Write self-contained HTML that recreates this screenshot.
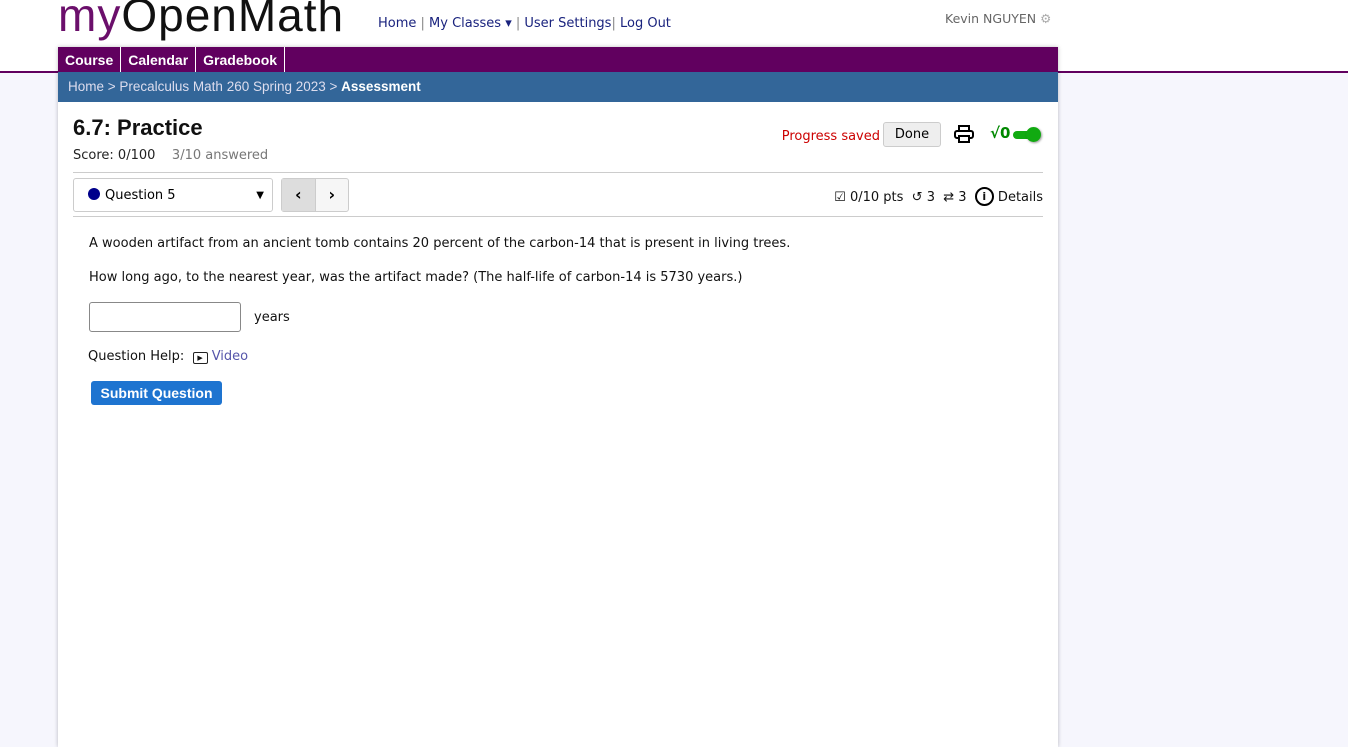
<!DOCTYPE html>
<html><head><style>
body{margin:0;width:1348px;height:713px;overflow:hidden;background:#f6f6fd;font-family:"DejaVu Sans",sans-serif;position:relative}
.hdr{position:absolute;left:0;top:0;width:1348px;height:71px;background:#fff;border-bottom:2px solid #61005f}
.logo{position:absolute;left:58px;top:-12px;font-size:46px;color:#111;font-family:"Liberation Sans",sans-serif;letter-spacing:1px}
.logo span{color:#6b0f6b}
.nav{position:absolute;left:378px;top:16px;font-size:13px;color:#888}
.nav a{color:#1a237e;text-decoration:none}
.user{position:absolute;left:945px;top:11px;font-size:12.5px;color:#666}
.main{position:absolute;left:58px;top:47px;width:1000px;height:700px;background:#fff;box-shadow:0 0 4px rgba(0,0,0,.25)}
.tabs{height:25px;background:#61005f;display:flex;font-family:"Liberation Sans",sans-serif}
.tabs div{color:#fff;font-size:14px;font-weight:bold;padding:5px 7px 0;border-right:1px solid #fff}
.crumb{height:30px;background:#336699;color:#dde;font-size:13.5px;line-height:30px;padding-left:10px;font-family:"Liberation Sans",sans-serif}
.crumb b{color:#fff}
.abs{position:absolute}
.t{font-size:13px;color:#111}
</style></head><body>
<div class="hdr"></div>
<div class="logo"><span>my</span>OpenMath</div>
<div class="nav"><a>Home</a> | <a>My Classes ▾</a> | <a>User Settings</a>| <a>Log Out</a></div>
<div class="user">Kevin NGUYEN <span style="color:#aaa">⚙</span></div>
<div class="main">
<div class="tabs"><div>Course</div><div>Calendar</div><div>Gradebook</div></div>
<div class="crumb">Home &gt; Precalculus Math 260 Spring 2023 &gt; <b>Assessment</b></div>
<div class="abs" style="left:15px;top:68px;font-size:22px;font-weight:bold;color:#111;font-family:'Liberation Sans',sans-serif">6.7: Practice</div>
<div class="abs" style="left:15px;top:101px;font-size:13px;color:#222">Score: 0/100 &nbsp;&nbsp;&nbsp;<span style="color:#777">3/10 answered</span></div>
<div class="abs" style="right:178px;top:82px;font-size:13px;color:#c00">Progress saved</div>
<div class="abs" style="left:825px;top:75px;width:56px;height:23px;border:1px solid #ccc;border-radius:3px;background:#eee;font-size:13px;text-align:center;line-height:23px">Done</div>
<svg class="abs" style="left:896px;top:78px" width="20" height="18" viewBox="0 0 20 18"><rect x="5" y="1" width="10" height="5" fill="none" stroke="#000" stroke-width="2"/><rect x="1" y="6" width="18" height="7" rx="2" fill="none" stroke="#000" stroke-width="2"/><rect x="5" y="11" width="10" height="6" fill="#fff" stroke="#000" stroke-width="2"/></svg>
<div class="abs" style="left:932px;top:77px;font-size:15px;font-weight:bold;color:#080">√0</div>
<div class="abs" style="left:955px;top:84px;width:22px;height:8px;background:#1a1;border-radius:4px"></div>
<div class="abs" style="left:968px;top:80px;width:15px;height:15px;background:#1a1;border-radius:50%;box-shadow:1px 1px 2px rgba(0,0,0,.4)"></div>
<div class="abs" style="left:15px;top:125px;width:970px;border-top:1px solid #ccc"></div>
<div class="abs" style="left:15px;top:131px;width:198px;height:32px;border:1px solid #ccc;border-radius:3px;font-size:13px;line-height:34px"><span style="display:inline-block;width:12px;height:12px;background:#00008b;border-radius:50%;margin:0 5px 0 14px;vertical-align:-1px"></span>Question 5<span style="position:absolute;right:8px;font-size:10px">▼</span></div>
<div class="abs" style="left:223px;top:131px;width:66px;height:32px;border:1px solid #ccc;border-radius:3px;background:#f6f6f6;display:flex"><div style="width:33px;background:#ddd;border-right:1px solid #ccc;text-align:center;line-height:32px;font-weight:bold">‹</div><div style="width:33px;text-align:center;line-height:32px;font-weight:bold">›</div></div>
<div class="abs" style="right:15px;top:140px;font-size:13px;color:#111">☑ 0/10 pts &nbsp;↺ 3 &nbsp;⇄ 3 &nbsp;<span style="display:inline-block;width:15px;height:15px;border:2px solid #000;border-radius:50%;text-align:center;font-size:11px;line-height:15px;font-weight:bold;vertical-align:1px">i</span> Details</div>
<div class="abs" style="left:15px;top:169px;width:970px;border-top:1px solid #ccc"></div>
<div class="abs t" style="left:31px;top:189px">A wooden artifact from an ancient tomb contains 20 percent of the carbon-14 that is present in living trees.</div>
<div class="abs t" style="left:31px;top:223px">How long ago, to the nearest year, was the artifact made? (The half-life of carbon-14 is 5730 years.)</div>
<div class="abs" style="left:31px;top:255px;width:150px;height:28px;border:1px solid #888;border-radius:3px"></div>
<div class="abs t" style="left:196px;top:263px">years</div>
<div class="abs t" style="left:30px;top:302px">Question Help: &nbsp;<span style="display:inline-block;width:13px;height:10px;border:1.5px solid #222;border-radius:2px;font-size:7px;line-height:10px;text-align:center;vertical-align:0">▶</span> <span style="color:#5555aa">Video</span></div>
<div class="abs" style="left:33px;top:334px;width:131px;height:24px;background:#1e74d0;border-radius:3px;color:#fff;font-size:14px;font-weight:bold;text-align:center;line-height:25px;font-family:'Liberation Sans',sans-serif">Submit Question</div>
</div>
</body></html>
